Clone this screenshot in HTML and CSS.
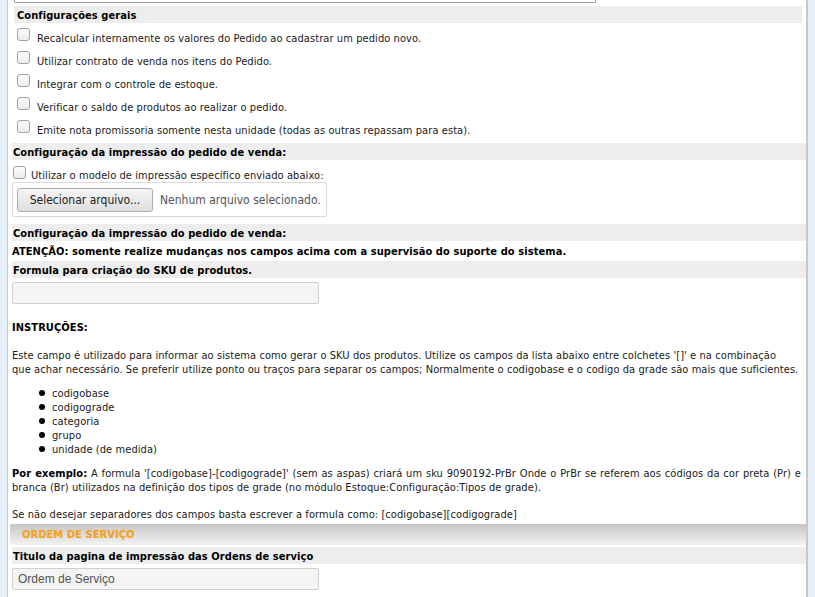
FILE: index.html
```html
<!DOCTYPE html>
<html lang="pt-BR">
<head>
  <meta charset="UTF-8" />
  <title>Configurações</title>
  <link rel="stylesheet" href="styles.css">
</head>
<body>
  <div class="page">
    <div class="top-field"></div>

    <div class="section-geral">
      <div class="section-title">Configurações gerais</div>
      <label class="opt"><input type="checkbox"><span>Recalcular internamente os valores do Pedido ao cadastrar um pedido novo.</span></label>
      <label class="opt"><input type="checkbox"><span>Utilizar contrato de venda nos itens do Pedido.</span></label>
      <label class="opt"><input type="checkbox"><span>Integrar com o controle de estoque.</span></label>
      <label class="opt"><input type="checkbox"><span>Verificar o saldo de produtos ao realizar o pedido.</span></label>
      <label class="opt"><input type="checkbox"><span>Emite nota promissoria somente nesta unidade (todas as outras repassam para esta).</span></label>
    </div>

    <div class="section-title">Configuração da impressão do pedido de venda:</div>
    <label class="opt opt-tight"><input type="checkbox"><span>Utilizar o modelo de impressão específico enviado abaixo:</span></label>
    <div class="file-box">
      <button class="file-btn">Selecionar arquivo...</button>
      <span class="file-name">Nenhum arquivo selecionado.</span>
    </div>

    <div class="section-title">Configuração da impressão do pedido de venda:</div>
    <div class="warning">ATENÇÃO: somente realize mudanças nos campos acima com a supervisão do suporte do sistema.</div>

    <div class="section-title">Formula para criação do SKU de produtos.</div>
    <input class="text-field" type="text">

    <div class="help">
      <p class="help-title">INSTRUÇÕES:</p>
      <p class="help-intro">Este campo é utilizado para informar ao sistema como gerar o SKU dos produtos. Utilize os campos da lista abaixo entre colchetes '[]' e na combinação<br>que achar necessário. Se preferir utilize ponto ou traços para separar os campos; Normalmente o codigobase e o codigo da grade são mais que suficientes.</p>
      <ul>
        <li>codigobase</li>
        <li>codigograde</li>
        <li>categoria</li>
        <li>grupo</li>
        <li>unidade (de medida)</li>
      </ul>
      <p><b>Por exemplo:</b> A formula '[codigobase]-[codigograde]' (sem as aspas) criará um sku 9090192-PrBr Onde o PrBr se referem aos códigos da cor preta (Pr) e branca (Br) utilizados na definição dos tipos de grade (no módulo Estoque:Configuração:Tipos de grade).</p>
      <p class="help-last">Se não desejar separadores dos campos basta escrever a formula como: [codigobase][codigograde]</p>
    </div>

    <div class="group-bar">ORDEM DE SERVIÇO</div>
    <div class="section-title section-after-bar">Titulo da pagina de impressão das Ordens de serviço</div>
    <input class="text-field" type="text" value="Ordem de Serviço">
  </div>
</body>
</html>
```
FILE: styles.css
```css
* { box-sizing: border-box; }

body {
  margin: 0;
  background: #e6f0fb;
  font-family: 'DejaVu Sans Condensed', 'DejaVu Sans', sans-serif;
  font-size: 11px;
  line-height: 14px;
  letter-spacing: 0.08px;
  color: #1a1a1a;
}

.page {
  margin: 0 7px;
  min-height: 597px;
  background: #fff;
  border-left: 1px solid #c8c8c8;
  border-right: 2px solid #c8c8c8;
  padding: 0 0 0 4px;
}

.top-field {
  margin-left: 2px;
  width: 582px;
  height: 3px;
  border: 1px solid #9a9a9a;
  border-top: none;
  border-radius: 0 0 2px 2px;
}

.section-geral {
  margin: 3px 4px 0 2px;
}

.section-title {
  height: 17px;
  line-height: 19px;
  padding-left: 1px;
  background: #ededed;
  font-weight: bold;
  color: #000;
}

.section-geral .section-title {
  padding-left: 3px;
}

.opt {
  display: flex;
  align-items: flex-start;
  height: 23px;
}

.opt input {
  appearance: none;
  -webkit-appearance: none;
  width: 13px;
  height: 13px;
  margin: 5px 7px 0 3px;
  border: 1px solid #a2a2a2;
  border-radius: 3px;
  background: linear-gradient(#fdfdfd, #ececec);
  flex: none;
}

.opt span {
  padding-top: 9px;
}

.section-geral + .section-title {
  margin-top: 5px;
}

.opt-tight {
  height: 22px;
}

.opt-tight input {
  margin: 6px 5px 0 1px;
}

.opt-tight span {
  padding-top: 9px;
}

.file-box {
  display: flex;
  align-items: center;
  width: 315px;
  height: 35px;
  border: 1px solid #dadada;
  border-radius: 2px;
  padding: 0 4px;
  margin-bottom: 7px;
  white-space: nowrap;
}

.file-btn {
  height: 24px;
  width: 136px;
  padding: 0;
  border: 1px solid #acacac;
  border-radius: 3px;
  background: linear-gradient(#f5f5f5, #dedede);
  font-family: 'DejaVu Sans Condensed', 'DejaVu Sans', sans-serif;
  font-size: 12px;
  color: #222;
}

.file-name {
  margin-left: 7px;
  font-size: 12px;
  letter-spacing: 0;
  color: #555;
}

.warning {
  height: 20px;
  line-height: 21px;
  font-weight: bold;
  color: #000;
}

.text-field {
  display: block;
  width: 307px;
  height: 22px;
  margin-top: 4px;
  padding: 0 5px;
  border: 1px solid #d0d0d0;
  border-radius: 2px;
  background: #f4f4f4;
  font-family: 'Liberation Sans', Arial, sans-serif;
  font-size: 12px;
  letter-spacing: 0;
  color: #555;
}

.help {
  padding-right: 5px;
}

.help p {
  margin: 10px 0 0;
}

.help .help-title {
  margin-top: 17px;
  font-weight: bold;
  color: #000;
}

.help .help-intro {
  margin-top: 14px;
}

.help b {
  color: #000;
}

.help ul {
  margin: 10px 0 0;
  padding-left: 40px;
  list-style: none;
}

.help li::before {
  content: '';
  display: inline-block;
  width: 6px;
  height: 6px;
  margin: 0 7px 3px -13px;
  border-radius: 50%;
  background: #000;
  vertical-align: middle;
}

.help ul + p {
  text-align: justify;
}

.help .help-last {
  margin-top: 13px;
}

.group-bar {
  margin: 2px 0 0 -2px;
  height: 21px;
  line-height: 21px;
  padding-left: 12px;
  background: linear-gradient(#c5c5c5, #f3f3f3);
  font-weight: bold;
  color: #f0a22c;
  text-shadow: 0 0 1px #f7c46e;
}

.section-after-bar {
  margin-top: 2px;
}
```
